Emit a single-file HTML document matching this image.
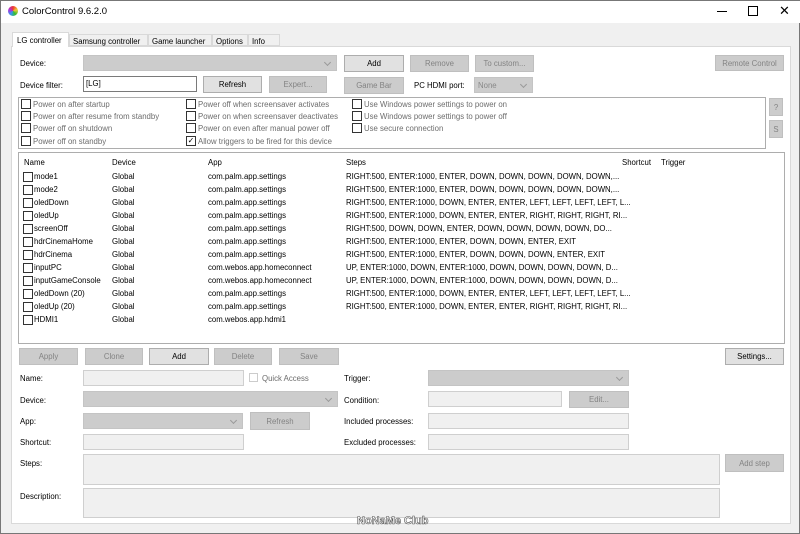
<!DOCTYPE html><html><head><style>
*{box-sizing:border-box;margin:0;padding:0}
body{width:800px;height:534px;background:#f0f0f0;font-family:"Liberation Sans",sans-serif;font-size:7.8px;color:#000;position:relative;overflow:hidden;border:1px solid #777}
.a{position:absolute;white-space:nowrap}
.btn{position:absolute;background:#e1e1e1;border:1px solid #adadad;text-align:center;color:#000;display:flex;align-items:center;justify-content:center}
.dis{background:#cccccc;border-color:#bfbfbf;color:#838383}
.inp{position:absolute;background:#fff;border:1px solid #7a7a7a}
.dinp{position:absolute;background:#f0f0f0;border:1px solid #cfcfcf}
.cmb{position:absolute;background:#cccccc;border:1px solid #c4c4c4}
.cmb:after{content:"";position:absolute;right:6px;top:4px;width:4px;height:4px;border-right:1px solid #999;border-bottom:1px solid #999;transform:rotate(45deg)}
.cb{position:absolute;width:10px;height:10px;border:1px solid #333;background:#fff}
.g{color:#6d6d6d}
.r .a{line-height:10px}
</style></head><body>
<div class="a" style="left:0;top:0;width:800px;height:22px;background:#fff"></div>
<div class="a" style="left:7px;top:5px;width:10px;height:10px;border-radius:50%;background:conic-gradient(#e33,#ec3,#3b3,#39e,#a3d,#e33)"></div>
<div class="a" style="left:21px;top:5px;font-size:9.5px">ColorControl 9.6.2.0</div>
<div class="a" style="left:716px;top:10px;width:10px;height:1px;background:#000"></div>
<div class="a" style="left:747px;top:5px;width:10px;height:10px;border:1px solid #000"></div>
<div class="a" style="left:778px;top:2px;font-size:13px">✕</div>
<div class="a" style="left:10px;top:45px;width:780px;height:478px;background:#fff;border:1px solid #d9d9d9"></div>
<div class="a" style="left:11px;top:31px;width:57px;height:15px;background:#fff;border:1px solid #d9d9d9;border-bottom:none;padding:3px 4px">LG controller</div>
<div class="a" style="left:68px;top:33px;width:79px;height:12px;background:#f0f0f0;border:1px solid #d9d9d9;padding:2px 3px">Samsung controller</div>
<div class="a" style="left:147px;top:33px;width:64px;height:12px;background:#f0f0f0;border:1px solid #d9d9d9;padding:2px 3px">Game launcher</div>
<div class="a" style="left:211px;top:33px;width:36px;height:12px;background:#f0f0f0;border:1px solid #d9d9d9;padding:2px 3px">Options</div>
<div class="a" style="left:247px;top:33px;width:32px;height:12px;background:#f0f0f0;border:1px solid #d9d9d9;padding:2px 3px">Info</div>
<div class="a" style="left:19px;top:58px">Device:</div>
<div class="cmb" style="left:82px;top:54px;width:254px;height:16px"></div>
<div class="btn" style="left:343px;top:54px;width:60px;height:17px">Add</div>
<div class="btn dis" style="left:409px;top:54px;width:59px;height:17px">Remove</div>
<div class="btn dis" style="left:474px;top:54px;width:59px;height:17px">To custom...</div>
<div class="btn dis" style="left:714px;top:54px;width:69px;height:16px">Remote Control</div>
<div class="a" style="left:19px;top:80px">Device filter:</div>
<div class="inp" style="left:82px;top:75px;width:114px;height:16px;padding:2px 2px">[LG]</div>
<div class="btn" style="left:202px;top:75px;width:59px;height:17px">Refresh</div>
<div class="btn dis" style="left:268px;top:75px;width:58px;height:17px">Expert...</div>
<div class="btn dis" style="left:343px;top:76px;width:60px;height:17px">Game Bar</div>
<div class="a" style="left:413px;top:80px">PC HDMI port:</div>
<div class="cmb" style="left:473px;top:76px;width:59px;height:16px;color:#888;padding:3px 3px">None</div>
<div class="a" style="left:17px;top:96px;width:748px;height:52px;border:1px solid #adadad"></div>
<div class="cb" style="left:20px;top:98px"></div><div class="a g" style="left:32px;top:99px">Power on after startup</div>
<div class="cb" style="left:20px;top:110px"></div><div class="a g" style="left:32px;top:111px">Power on after resume from standby</div>
<div class="cb" style="left:20px;top:122px"></div><div class="a g" style="left:32px;top:123px">Power off on shutdown</div>
<div class="cb" style="left:20px;top:135px"></div><div class="a g" style="left:32px;top:136px">Power off on standby</div>
<div class="cb" style="left:185px;top:98px"></div><div class="a g" style="left:197px;top:99px">Power off when screensaver activates</div>
<div class="cb" style="left:185px;top:110px"></div><div class="a g" style="left:197px;top:111px">Power on when screensaver deactivates</div>
<div class="cb" style="left:185px;top:122px"></div><div class="a g" style="left:197px;top:123px">Power on even after manual power off</div>
<div class="cb" style="left:185px;top:135px;font-size:8px;line-height:8px;text-align:center">✓</div><div class="a g" style="left:197px;top:136px">Allow triggers to be fired for this device</div>
<div class="cb" style="left:351px;top:98px"></div><div class="a g" style="left:363px;top:99px">Use Windows power settings to power on</div>
<div class="cb" style="left:351px;top:110px"></div><div class="a g" style="left:363px;top:111px">Use Windows power settings to power off</div>
<div class="cb" style="left:351px;top:122px"></div><div class="a g" style="left:363px;top:123px">Use secure connection</div>
<div class="btn dis" style="left:768px;top:97px;width:14px;height:18px">?</div>
<div class="btn dis" style="left:768px;top:119px;width:14px;height:18px">S</div>
<div class="a" style="left:17px;top:151px;width:767px;height:192px;border:1px solid #adadad;background:#fff"></div>
<div class="a" style="left:23px;top:157px">Name</div><div class="a" style="left:111px;top:157px">Device</div><div class="a" style="left:207px;top:157px">App</div><div class="a" style="left:345px;top:157px">Steps</div><div class="a" style="left:621px;top:157px">Shortcut</div><div class="a" style="left:660px;top:157px">Trigger</div>
<div class="a r" style="left:22px;top:171px">
<div style="position:relative">
<div class="cb" style="left:0;top:0"></div><div class="a" style="left:11px;top:0">mode1</div><div class="a" style="left:89px;top:0">Global</div><div class="a" style="left:185px;top:0">com.palm.app.settings</div><div class="a" style="left:323px;top:0">RIGHT:500, ENTER:1000, ENTER, DOWN, DOWN, DOWN, DOWN, DOWN,...</div>
<div class="cb" style="left:0;top:13px"></div><div class="a" style="left:11px;top:13px">mode2</div><div class="a" style="left:89px;top:13px">Global</div><div class="a" style="left:185px;top:13px">com.palm.app.settings</div><div class="a" style="left:323px;top:13px">RIGHT:500, ENTER:1000, ENTER, DOWN, DOWN, DOWN, DOWN, DOWN,...</div>
<div class="cb" style="left:0;top:26px"></div><div class="a" style="left:11px;top:26px">oledDown</div><div class="a" style="left:89px;top:26px">Global</div><div class="a" style="left:185px;top:26px">com.palm.app.settings</div><div class="a" style="left:323px;top:26px">RIGHT:500, ENTER:1000, DOWN, ENTER, ENTER, LEFT, LEFT, LEFT, LEFT, L...</div>
<div class="cb" style="left:0;top:39px"></div><div class="a" style="left:11px;top:39px">oledUp</div><div class="a" style="left:89px;top:39px">Global</div><div class="a" style="left:185px;top:39px">com.palm.app.settings</div><div class="a" style="left:323px;top:39px">RIGHT:500, ENTER:1000, DOWN, ENTER, ENTER, RIGHT, RIGHT, RIGHT, RI...</div>
<div class="cb" style="left:0;top:52px"></div><div class="a" style="left:11px;top:52px">screenOff</div><div class="a" style="left:89px;top:52px">Global</div><div class="a" style="left:185px;top:52px">com.palm.app.settings</div><div class="a" style="left:323px;top:52px">RIGHT:500, DOWN, DOWN, ENTER, DOWN, DOWN, DOWN, DOWN, DO...</div>
<div class="cb" style="left:0;top:65px"></div><div class="a" style="left:11px;top:65px">hdrCinemaHome</div><div class="a" style="left:89px;top:65px">Global</div><div class="a" style="left:185px;top:65px">com.palm.app.settings</div><div class="a" style="left:323px;top:65px">RIGHT:500, ENTER:1000, ENTER, DOWN, DOWN, ENTER, EXIT</div>
<div class="cb" style="left:0;top:78px"></div><div class="a" style="left:11px;top:78px">hdrCinema</div><div class="a" style="left:89px;top:78px">Global</div><div class="a" style="left:185px;top:78px">com.palm.app.settings</div><div class="a" style="left:323px;top:78px">RIGHT:500, ENTER:1000, ENTER, DOWN, DOWN, DOWN, ENTER, EXIT</div>
<div class="cb" style="left:0;top:91px"></div><div class="a" style="left:11px;top:91px">inputPC</div><div class="a" style="left:89px;top:91px">Global</div><div class="a" style="left:185px;top:91px">com.webos.app.homeconnect</div><div class="a" style="left:323px;top:91px">UP, ENTER:1000, DOWN, ENTER:1000, DOWN, DOWN, DOWN, DOWN, D...</div>
<div class="cb" style="left:0;top:104px"></div><div class="a" style="left:11px;top:104px">inputGameConsole</div><div class="a" style="left:89px;top:104px">Global</div><div class="a" style="left:185px;top:104px">com.webos.app.homeconnect</div><div class="a" style="left:323px;top:104px">UP, ENTER:1000, DOWN, ENTER:1000, DOWN, DOWN, DOWN, DOWN, D...</div>
<div class="cb" style="left:0;top:117px"></div><div class="a" style="left:11px;top:117px">oledDown (20)</div><div class="a" style="left:89px;top:117px">Global</div><div class="a" style="left:185px;top:117px">com.palm.app.settings</div><div class="a" style="left:323px;top:117px">RIGHT:500, ENTER:1000, DOWN, ENTER, ENTER, LEFT, LEFT, LEFT, LEFT, L...</div>
<div class="cb" style="left:0;top:130px"></div><div class="a" style="left:11px;top:130px">oledUp (20)</div><div class="a" style="left:89px;top:130px">Global</div><div class="a" style="left:185px;top:130px">com.palm.app.settings</div><div class="a" style="left:323px;top:130px">RIGHT:500, ENTER:1000, DOWN, ENTER, ENTER, RIGHT, RIGHT, RIGHT, RI...</div>
<div class="cb" style="left:0;top:143px"></div><div class="a" style="left:11px;top:143px">HDMI1</div><div class="a" style="left:89px;top:143px">Global</div><div class="a" style="left:185px;top:143px">com.webos.app.hdmi1</div>
</div></div>
<div class="btn dis" style="left:18px;top:347px;width:59px;height:17px">Apply</div>
<div class="btn dis" style="left:84px;top:347px;width:58px;height:17px">Clone</div>
<div class="btn" style="left:148px;top:347px;width:60px;height:17px">Add</div>
<div class="btn dis" style="left:213px;top:347px;width:58px;height:17px">Delete</div>
<div class="btn dis" style="left:278px;top:347px;width:60px;height:17px">Save</div>
<div class="btn" style="left:724px;top:347px;width:59px;height:17px">Settings...</div>
<div class="a" style="left:19px;top:373px">Name:</div>
<div class="dinp" style="left:82px;top:369px;width:161px;height:16px"></div>
<div class="a" style="left:248px;top:372px;width:9px;height:9px;border:1px solid #ccc"></div>
<div class="a g" style="left:261px;top:373px">Quick Access</div>
<div class="a" style="left:343px;top:373px">Trigger:</div>
<div class="cmb" style="left:427px;top:369px;width:201px;height:16px"></div>
<div class="a" style="left:19px;top:395px">Device:</div>
<div class="cmb" style="left:82px;top:390px;width:255px;height:16px"></div>
<div class="a" style="left:343px;top:395px">Condition:</div>
<div class="dinp" style="left:427px;top:390px;width:134px;height:16px"></div>
<div class="btn dis" style="left:568px;top:390px;width:60px;height:17px">Edit...</div>
<div class="a" style="left:19px;top:416px">App:</div>
<div class="cmb" style="left:82px;top:412px;width:160px;height:16px"></div>
<div class="btn dis" style="left:249px;top:411px;width:60px;height:18px">Refresh</div>
<div class="a" style="left:343px;top:416px">Included processes:</div>
<div class="dinp" style="left:427px;top:412px;width:201px;height:16px"></div>
<div class="a" style="left:19px;top:437px">Shortcut:</div>
<div class="dinp" style="left:82px;top:433px;width:161px;height:16px"></div>
<div class="a" style="left:343px;top:437px">Excluded processes:</div>
<div class="dinp" style="left:427px;top:433px;width:201px;height:16px"></div>
<div class="a" style="left:19px;top:458px">Steps:</div>
<div class="dinp" style="left:82px;top:453px;width:637px;height:31px"></div>
<div class="btn dis" style="left:724px;top:453px;width:59px;height:18px">Add step</div>
<div class="a" style="left:19px;top:491px">Description:</div>
<div class="dinp" style="left:82px;top:487px;width:637px;height:30px"></div>
<div class="a" style="left:356px;top:514px;font-size:11px;font-weight:bold;color:#fff;-webkit-text-stroke:0.6px #555">NoNaMe Club</div>
</body></html>
